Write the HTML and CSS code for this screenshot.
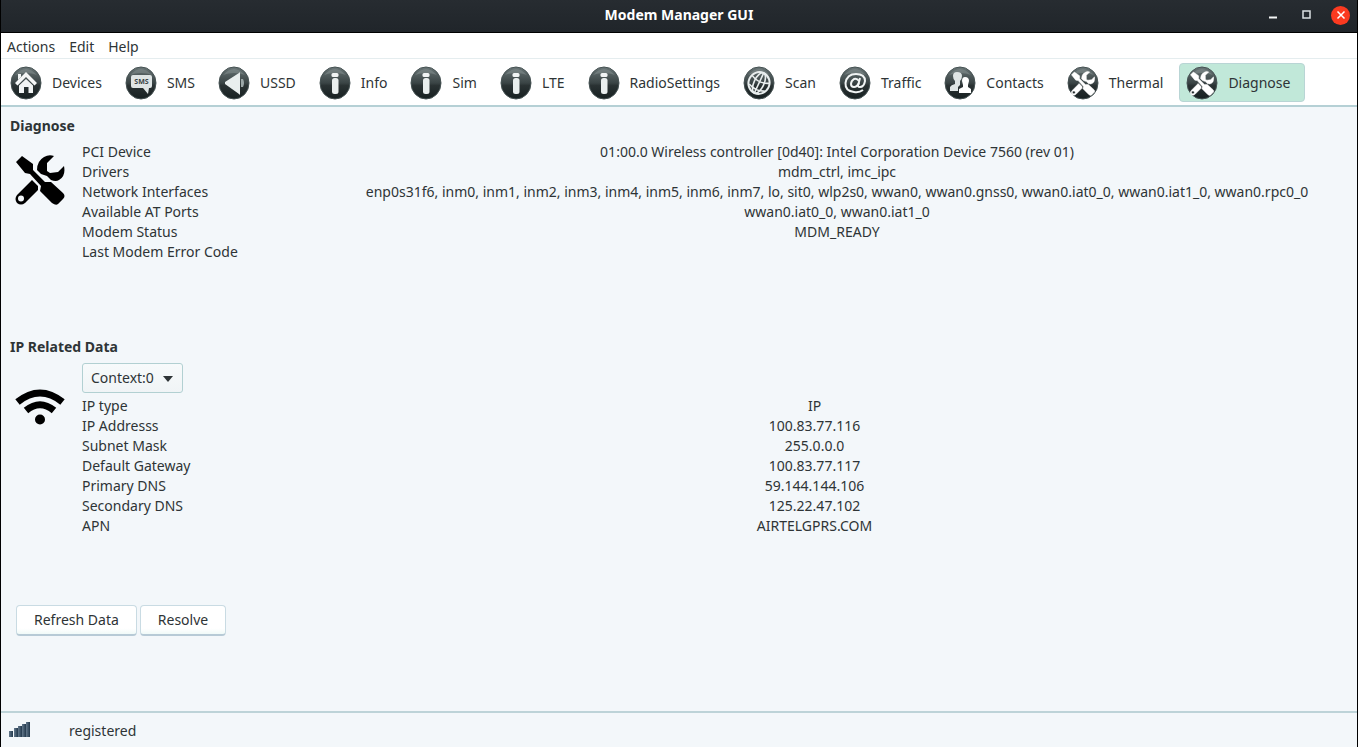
FILE: index.html
```html
<!DOCTYPE html>
<html lang="en">
<head>
<meta charset="utf-8">
<title>Modem Manager GUI</title>
<link rel="stylesheet" href="styles.css">
</head>
<body>
<svg class="defs" width="0" height="0" aria-hidden="true">
  <defs>
    <linearGradient id="disc" x1="0" y1="0" x2="0" y2="1">
      <stop offset="0" stop-color="#6b7778"/>
      <stop offset=".2" stop-color="#566162"/>
      <stop offset=".5" stop-color="#3a4445"/>
      <stop offset=".58" stop-color="#2a3233"/>
      <stop offset="1" stop-color="#172021"/>
    </linearGradient>
    <linearGradient id="bar" x1="0" y1="0" x2="1" y2="0">
      <stop offset="0" stop-color="#64798c"/>
      <stop offset="1" stop-color="#22384c"/>
    </linearGradient>
    <symbol id="badge" viewBox="0 0 32 34">
      <ellipse cx="16" cy="17" rx="15" ry="16" fill="url(#disc)" stroke="#465253"/>
      <path d="M5 9Q16-3 27 9Q16 5 5 9z" fill="#8b9697" opacity=".45"/>
    </symbol>
    <symbol id="info" viewBox="0 0 32 34">
      <use href="#badge"/>
      <rect x="12.500" y="7" width="7" height="4" rx="1.500" fill="#f1f4f4"/>
      <rect x="13" y="12" width="6.500" height="16" rx="2.500" fill="#e9eeee"/>
    </symbol>
    <symbol id="tools" viewBox="0 0 50 50">
      <path d="M1 7L7 1L18 9L18 15L30 27L36 27L48 38Q51 41 48 44L43 49Q41 51 37 48L25 36L26 31L15 19L10 18Z"/>
      <path d="M39 1L32 8V16L35 18L43 17L49 11Q51 21 44 25Q41 27 36 25L32 21L26 19L22 15Q22 6 29 2Q34-1 39 1Z"/>
      <path fill-rule="evenodd" d="M17 25L23 31V35L10 48Q6 51 2 48Q-1 44 2 40ZM6 40.500A3 3 0 1 0 6 46.500A3 3 0 1 0 6 40.500Z"/>
    </symbol>
    <symbol id="toolbadge" viewBox="0 0 32 34">
      <use href="#badge"/>
      <use href="#tools" x="4" y="5" width="24" height="25" fill="#fff" stroke="#fff"/>
    </symbol>
  </defs>
</svg>
<div class="window">
  <header class="titlebar">
    <h1 class="title">Modem Manager GUI</h1>
    <div class="controls">
      <button class="control" aria-label="Minimize"><svg width="10" height="10" viewBox="0 0 10 10"><path d="M1 7.500H9" stroke="#f4f6f6" stroke-width="2"/></svg></button>
      <button class="control" aria-label="Maximize"><svg width="10" height="10" viewBox="0 0 10 10"><rect x="1" y="1" width="7" height="7" fill="none" stroke="#dce1e3" stroke-width="1.500"/></svg></button>
      <button class="control close" aria-label="Close"><svg width="10" height="10" viewBox="0 0 10 10"><path d="M1.500 1.500L8.500 8.500M8.500 1.500L1.500 8.500" stroke="#fff" stroke-width="1.500"/></svg></button>
    </div>
  </header>
  <nav class="menubar">
    <button class="menu">Actions</button>
    <button class="menu">Edit</button>
    <button class="menu">Help</button>
  </nav>
  <nav class="toolbar">
    <button class="tool"><svg class="icon" viewBox="0 0 32 34"><use href="#badge"/><path d="M5 17L16 6L27 17L24.500 19.500L16 11L7.500 19.500Z" fill="#f5f7f7"/><path d="M8 8H11V11L8 14ZM9 19.500L16 13L23 19.500V27H18.500V21H14V27H9Z" fill="#f1f4f4"/></svg>Devices</button>
    <button class="tool"><svg class="icon" viewBox="0 0 32 34"><use href="#badge"/><path d="M8 9H25Q27 9 27 11V20Q27 22 25 22H24L23 28L18 22H8Q6 22 6 20V11Q6 9 8 9Z" fill="#dfe5e5"/><text x="16.500" y="18" class="smstext">SMS</text></svg>SMS</button>
    <button class="tool"><svg class="icon" viewBox="0 0 32 34"><use href="#badge"/><path d="M22 6V29L21 28L7 18V16L21 7Z" fill="#e9eeee"/><path d="M23 13H25Q27 17 25 21H23Z" fill="#9ba6a7"/></svg>USSD</button>
    <button class="tool"><svg class="icon"><use href="#info"/></svg>Info</button>
    <button class="tool"><svg class="icon"><use href="#info"/></svg>Sim</button>
    <button class="tool"><svg class="icon"><use href="#info"/></svg>LTE</button>
    <button class="tool"><svg class="icon"><use href="#info"/></svg>RadioSettings</button>
    <button class="tool"><svg class="icon" viewBox="0 0 32 34"><use href="#badge"/><g fill="none" stroke="#e9eeee" stroke-width="1.600" transform="rotate(25 16 17)"><ellipse cx="16" cy="17" rx="10.500" ry="11" stroke-width="2"/><ellipse cx="16" cy="17" rx="5" ry="11"/><path d="M16 6V28M6.500 13Q16 18 25.500 13M7.500 22Q16 26 24.500 22"/></g></svg>Scan</button>
    <button class="tool"><svg class="icon" viewBox="0 0 32 34"><use href="#badge"/><g fill="none" stroke="#f1f4f4" stroke-width="2"><path d="M24 24Q20 27 15 26Q6 25 6.500 17Q8 8 17 8Q26 8 26 15Q25 21 21 21Q18 21 19.500 18L21 12"/><path d="M20 15Q18 12 15 13Q12 15 12 18Q12 21 15 21Q18 21 20 17"/></g></svg>Traffic</button>
    <button class="tool"><svg class="icon" viewBox="0 0 32 34"><use href="#badge"/><path d="M9 10Q9 6 13 6Q18 6 18 10Q18 13 16 15V19L14 21V25H6V21Q7 19 11 18V15Q9 13 9 10Z" fill="#dfe5e5"/><path d="M18 15Q18 11 21 11Q25 11 25 15L24 19V21L27 23V27H15V23L19 21V19Z" fill="#fff"/></svg>Contacts</button>
    <button class="tool"><svg class="icon"><use href="#toolbadge"/></svg>Thermal</button>
    <button class="tool active" aria-pressed="true"><svg class="icon"><use href="#toolbadge"/></svg>Diagnose</button>
  </nav>
  <main class="content">
    <section class="section diagnose">
      <h2 class="heading">Diagnose</h2>
      <div class="panel">
        <svg class="picture" viewBox="0 0 50 50"><use href="#tools"/></svg>
        <table class="data">
          <tr><th scope="row">PCI Device</th><td>01:00.0 Wireless controller [0d40]: Intel Corporation Device 7560 (rev 01)</td></tr>
          <tr><th scope="row">Drivers</th><td>mdm_ctrl, imc_ipc</td></tr>
          <tr><th scope="row">Network Interfaces</th><td>enp0s31f6, inm0, inm1, inm2, inm3, inm4, inm5, inm6, inm7, lo, sit0, wlp2s0, wwan0, wwan0.gnss0, wwan0.iat0_0, wwan0.iat1_0, wwan0.rpc0_0</td></tr>
          <tr><th scope="row">Available AT Ports</th><td>wwan0.iat0_0, wwan0.iat1_0</td></tr>
          <tr><th scope="row">Modem Status</th><td>MDM_READY</td></tr>
          <tr><th scope="row">Last Modem Error Code</th><td></td></tr>
        </table>
      </div>
    </section>
    <section class="section network">
      <h2 class="heading">IP Related Data</h2>
      <div class="panel">
        <svg class="picture wifi" viewBox="0 0 50 50"><g fill="none" stroke="#000" stroke-width="7"><path d="M2.500 19Q25 1 47.500 19"/><path d="M11 27.500Q25 16 39 27.500"/></g><circle cx="25" cy="36.500" r="5"/></svg>
        <div class="fields">
          <div class="context">
            <select class="select" aria-label="Context"><option>Context:0</option></select>
            <svg class="arrow" width="10" height="6" viewBox="0 0 10 6"><path d="M0 0H10L5 6Z" fill="#2e3436"/></svg>
          </div>
          <table class="data">
            <tr><th scope="row">IP type</th><td>IP</td></tr>
            <tr><th scope="row">IP Addresss</th><td>100.83.77.116</td></tr>
            <tr><th scope="row">Subnet Mask</th><td>255.0.0.0</td></tr>
            <tr><th scope="row">Default Gateway</th><td>100.83.77.117</td></tr>
            <tr><th scope="row">Primary DNS</th><td>59.144.144.106</td></tr>
            <tr><th scope="row">Secondary DNS</th><td>125.22.47.102</td></tr>
            <tr><th scope="row">APN</th><td>AIRTELGPRS.COM</td></tr>
          </table>
        </div>
      </div>
    </section>
    <div class="actions">
      <button class="button">Refresh Data</button>
      <button class="button">Resolve</button>
    </div>
  </main>
  <footer class="statusbar">
    <svg class="signal" width="22" height="18" viewBox="0 0 22 18" fill="url(#bar)"><rect x="0" y="9" width="4" height="6"/><rect x="5" y="6" width="4" height="9"/><rect x="9" y="4" width="4" height="11"/><rect x="13" y="2" width="4" height="13"/><rect x="17" y="0" width="4" height="15"/></svg>
    <span>registered</span>
  </footer>
</div>
</body>
</html>
```
FILE: styles.css
```css
* { box-sizing: border-box; }
body {
  margin: 0;
  font: 14px/20px "Noto Sans", "Open Sans", sans-serif;
  color: #2e3436;
}
button, select { font: inherit; color: inherit; margin: 0; }
.defs { position: absolute; }
.window {
  display: flex;
  flex-direction: column;
  min-height: 100vh;
  border: solid #000;
  border-width: 0 1px;
  background: #f3f7fa;
}
.titlebar {
  display: grid;
  grid-template-columns: 1fr auto 1fr;
  align-items: center;
  height: 33px;
  padding-bottom: 2px;
  background: linear-gradient(#272c31, #20252a);
  border-bottom: 1px solid #000;
  color: #fff;
}
.title { grid-column: 2; margin: 0; font-size: 14px; line-height: 20px; font-weight: 700; }
.controls { display: flex; justify-content: flex-end; gap: 15px; padding-right: 7px; }
.control {
  display: flex;
  align-items: center;
  justify-content: center;
  width: 19px;
  height: 19px;
  padding: 0;
  border: 0;
  border-radius: 50%;
  background: none;
}
.close { background: #fb3a20; }
.menubar {
  display: flex;
  gap: 14px;
  height: 26px;
  padding: 4px 6px 0;
  background: #fff;
  border-bottom: 1px solid #e5edef;
}
.menu { height: 20px; padding: 0; border: 0; background: none; }
.toolbar {
  display: flex;
  gap: 1px;
  height: 48px;
  padding: 4px 2px;
  background: #fff;
  border-bottom: 2px solid #b5d0d5;
}
.tool {
  display: flex;
  align-items: center;
  gap: 10px;
  height: 39px;
  padding: 0 14px 0 6px;
  border: 1px solid transparent;
  border-radius: 4px;
  background: none;
  white-space: nowrap;
}
.active { background: #c1e8d9; border-color: #b9d5d5; }
.icon { flex: none; width: 32px; height: 34px; }
.smstext { font: 700 7px "Noto Sans", sans-serif; fill: #3a4445; text-anchor: middle; }
.content { flex: 1; padding: 9px; }
.diagnose { min-height: 221px; }
.network { min-height: 268px; }
.heading { margin: 0 0 6px; font-size: 14px; line-height: 20px; font-weight: 700; }
.panel { display: flex; gap: 17px; padding-left: 5px; }
.picture { flex: none; width: 50px; height: 50px; margin-top: 13px; }
.wifi { margin-top: 20px; }
.data { width: 100%; border-collapse: collapse; }
.data th, .data td { height: 20px; padding: 0; font-weight: 400; }
.data th { width: 244px; text-align: left; }
.data td { text-align: center; }
.network .data th { width: 199px; }
.fields { flex: 1; }
.context { position: relative; width: 101px; margin-bottom: 3px; }
.select {
  display: block;
  width: 100%;
  height: 30px;
  padding: 0 8px;
  appearance: none;
  border: 1px solid #b2d0d2;
  border-radius: 3px;
  background: linear-gradient(#f7fafb, #f0f4f6);
}
.arrow { position: absolute; right: 10px; top: 13px; pointer-events: none; }
.actions { display: flex; gap: 3px; padding-left: 6px; }
.button {
  height: 31px;
  padding: 0 17px;
  border: 1px solid #c9dbe3;
  border-bottom: 2px solid #b7cad6;
  border-radius: 4px;
  background: linear-gradient(#fff 80%, #f0faf8);
}
.statusbar {
  display: flex;
  align-items: center;
  gap: 38px;
  height: 36px;
  padding: 2px 8px 0;
  border-top: 2px solid #bdd3d8;
}
```
